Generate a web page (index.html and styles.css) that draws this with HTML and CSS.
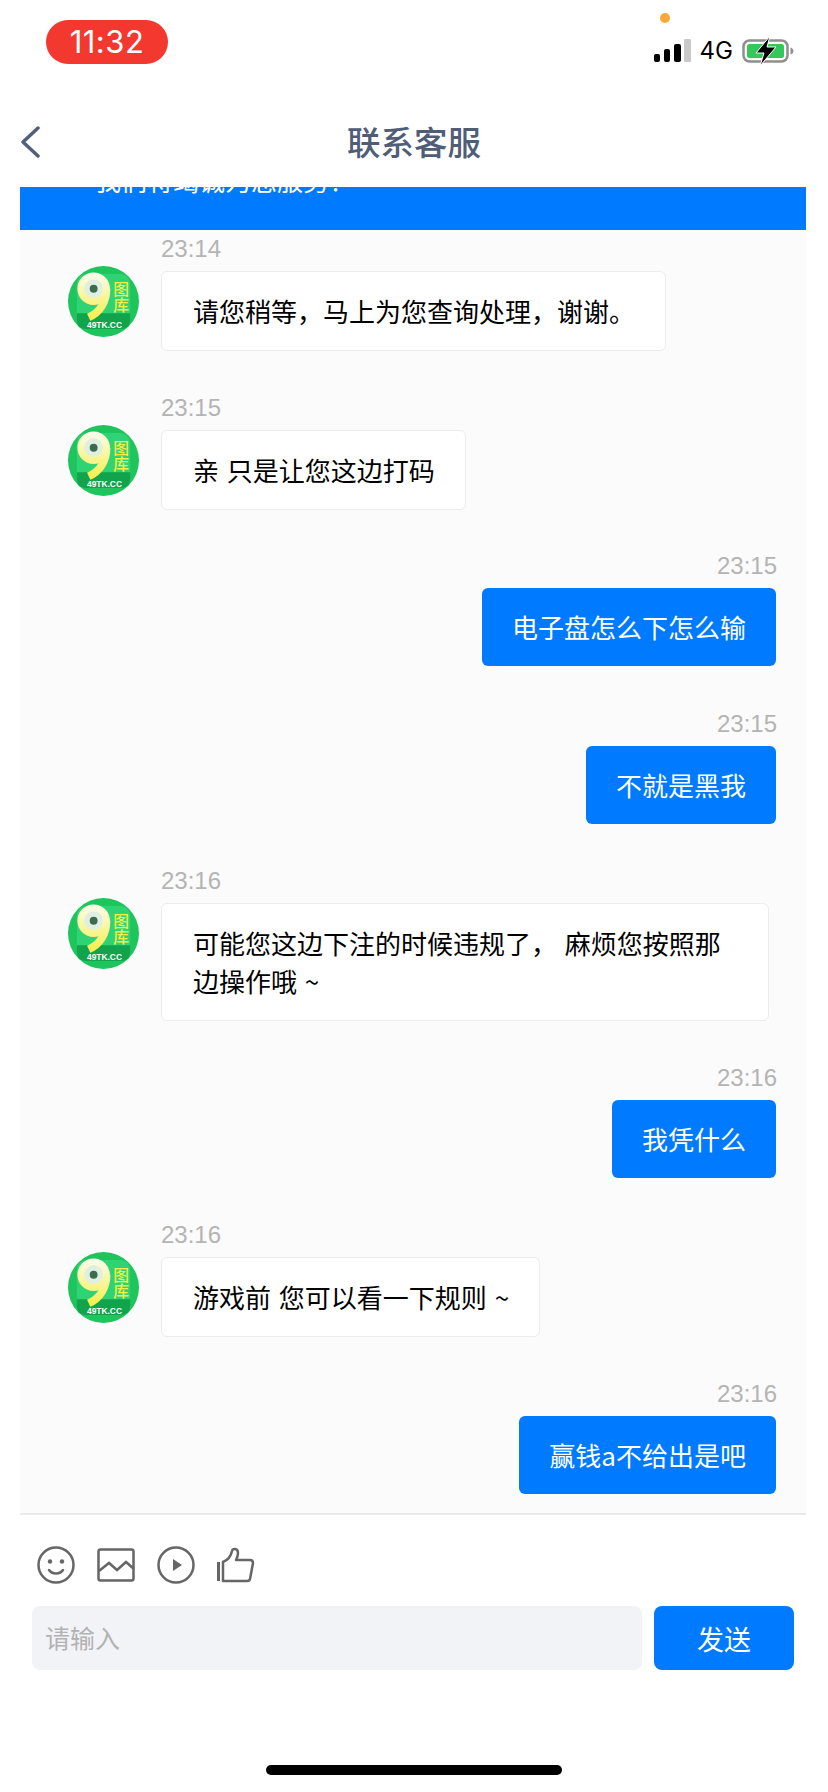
FILE: index.html

```html
<!DOCTYPE html>
<html lang="zh-CN">
<head>
    <meta charset="UTF-8">
    <meta name="viewport" content="width=device-width, initial-scale=1.0">
    <title>联系客服</title>
    <link rel="stylesheet" href="styles.css">
</head>
<body>

    <!-- avatar used by every agent message -->
    <svg class="defs" width="0" height="0">
        <defs>
            <linearGradient id="nine" gradientUnits="userSpaceOnUse" x1="0" y1="6" x2="0" y2="56">
                <stop offset="0" stop-color="#fdfdf0"/>
                <stop offset="1" stop-color="#f5ee45"/>
            </linearGradient>
            <symbol id="logo" viewBox="0 0 72 72">
                <circle cx="36" cy="36" r="36" fill="#1ec45c"/>
                <rect x="9" y="8" width="54" height="52" rx="10" fill="#2fd374"/>
                <path d="M9 48h54v6q0 10-10 10H19q-10 0-10-10z" fill="#12a34d"/>
                <circle cx="26" cy="23" r="13" fill="#dff0e2" stroke="url(#nine)" stroke-width="7"/>
                <path d="M39 23c0 14-7 24-18 29" fill="none" stroke="url(#nine)" stroke-width="8"/>
                <circle cx="26" cy="23" r="4" fill="#3d6b4c"/>
                <text x="54" y="29" class="logo-cn" text-anchor="middle">图</text>
                <text x="54" y="46" class="logo-cn" text-anchor="middle">库</text>
                <text x="37" y="63" class="logo-en" text-anchor="middle">49TK.CC</text>
            </symbol>
        </defs>
    </svg>

    <div class="status-bar">
        <div class="clock">11:32</div>
        <span class="mic-dot"></span>
        <div class="status-right">
            <svg width="37" height="24" viewBox="0 0 37 24">
                <rect x="0" y="15" width="6" height="8" rx="2" fill="#000"/>
                <rect x="10" y="10" width="6" height="13" rx="2" fill="#000"/>
                <rect x="20" y="5" width="7" height="18" rx="2" fill="#000"/>
                <rect x="30" y="0" width="7" height="23" rx="1" fill="#c9c9c9"/>
            </svg>
            <span class="network">4G</span>
            <svg width="52" height="30" viewBox="0 0 52 30">
                <rect x="1.500" y="4.500" width="44" height="21" rx="6" fill="none" stroke="#8f8f8f" stroke-width="2.500"/>
                <rect x="5" y="8" width="37" height="14" rx="2.500" fill="#34c759"/>
                <path d="M48.500 11.500c2 .6 3 2 3 3.500s-1 2.900-3 3.500z" fill="#8f8f8f"/>
                <path d="M28 0L14 17h8l-4 13 16-19h-9z" fill="#000" stroke="#fff" stroke-width="1"/>
            </svg>
        </div>
    </div>

    <div class="nav-bar">
        <svg class="back" width="20" height="32" viewBox="0 0 20 32">
            <path d="M18 2L3 16l15 14" fill="none" stroke="#52607a" stroke-width="3.500" stroke-linecap="round" stroke-linejoin="round"/>
        </svg>
        <h1>联系客服</h1>
    </div>

    <div class="chat">
        <div class="notice"><p>我们将竭诚为您服务！</p></div>

        <div class="msg">
            <svg class="avatar"><use href="#logo"/></svg>
            <div class="msg-body">
                <div class="time">23:14</div>
                <div class="bubble">请您稍等，马上为您查询处理，谢谢。</div>
            </div>
        </div>

        <div class="msg">
            <svg class="avatar"><use href="#logo"/></svg>
            <div class="msg-body">
                <div class="time">23:15</div>
                <div class="bubble">亲 只是让您这边打码</div>
            </div>
        </div>

        <div class="msg mine">
            <div class="msg-body">
                <div class="time">23:15</div>
                <div class="bubble">电子盘怎么下怎么输</div>
            </div>
        </div>

        <div class="msg mine">
            <div class="msg-body">
                <div class="time">23:15</div>
                <div class="bubble">不就是黑我</div>
            </div>
        </div>

        <div class="msg">
            <svg class="avatar"><use href="#logo"/></svg>
            <div class="msg-body">
                <div class="time">23:16</div>
                <div class="bubble">可能您这边下注的时候违规了， 麻烦您按照那边操作哦 ~</div>
            </div>
        </div>

        <div class="msg mine">
            <div class="msg-body">
                <div class="time">23:16</div>
                <div class="bubble">我凭什么</div>
            </div>
        </div>

        <div class="msg">
            <svg class="avatar"><use href="#logo"/></svg>
            <div class="msg-body">
                <div class="time">23:16</div>
                <div class="bubble">游戏前 您可以看一下规则 ~</div>
            </div>
        </div>

        <div class="msg mine">
            <div class="msg-body">
                <div class="time">23:16</div>
                <div class="bubble">赢钱a不给出是吧</div>
            </div>
        </div>
    </div>

    <div class="composer">
        <div class="tools">
            <svg width="38" height="38" viewBox="0 0 38 38" fill="none" stroke="#666" stroke-width="2.500">
                <circle cx="19" cy="19" r="17.500"/>
                <circle cx="13" cy="15.500" r="2.200" fill="#666" stroke="none"/>
                <circle cx="25" cy="15.500" r="2.200" fill="#666" stroke="none"/>
                <path d="M12 24c3 4.500 11 4.500 14 0" stroke-linecap="round"/>
            </svg>
            <svg width="38" height="38" viewBox="0 0 38 38" fill="none" stroke="#666" stroke-width="2.500">
                <rect x="1.500" y="3.500" width="35" height="31" rx="2"/>
                <path d="M2 25l10-8 8 7 9-8 8 7"/>
            </svg>
            <svg width="38" height="38" viewBox="0 0 38 38" fill="none" stroke="#666" stroke-width="2.500">
                <circle cx="19" cy="19" r="17.500"/>
                <path d="M16 13l9 6-9 6z" fill="#666" stroke="none"/>
            </svg>
            <svg width="38" height="38" viewBox="0 0 38 38" fill="none" stroke="#666" stroke-width="2.500">
                <path d="M1.500 16v19" stroke-width="3"/>
                <path d="M6 35V16c5-2 8-6 9-11 .5-3 6-3 6 2 0 3-1 5-2 7h14c2 0 3 1.500 3 3l-3 16c-.3 1.500-1.500 2-3 2z" stroke-linejoin="round"/>
            </svg>
        </div>
        <div class="input-row">
            <div class="input">请输入</div>
            <button type="button" class="send">发送</button>
        </div>
    </div>

    <div class="home-bar"></div>

</body>
</html>
```

FILE: styles.css

```css
* {
    box-sizing: border-box;
}
html, body {
    margin: 0;
    padding: 0;
}
body {
    width: 828px;
    height: 1792px;
    overflow: hidden;
    position: relative;
    display: flex;
    flex-direction: column;
    background: #fff;
    color: #000;
    font-family: "Liberation Sans", "Noto Sans CJK SC", sans-serif;
}
.defs {
    position: absolute;
}
.logo-cn {
    font-size: 16px;
    font-weight: 500;
    fill: #f3ee4a;
    font-family: "Noto Sans CJK SC", sans-serif;
}
.logo-en {
    font-size: 8.500px;
    font-weight: bold;
    fill: #fff;
    font-family: "Liberation Sans", sans-serif;
}

/* status bar */
.status-bar {
    height: 100px;
    display: flex;
    justify-content: space-between;
    align-items: flex-start;
    padding: 20px 34px 0 46px;
}
.clock {
    width: 122px;
    height: 44px;
    border-radius: 22px;
    background: #f2382f;
    color: #fff;
    font-family: Inter, "Liberation Sans", sans-serif;
    font-size: 31px;
    letter-spacing: 0.5px;
    line-height: 44px;
    text-align: center;
}
.mic-dot {
    position: absolute;
    left: 660px;
    top: 13px;
    width: 10px;
    height: 10px;
    border-radius: 50%;
    background: #f7a93b;
}
.status-right {
    display: flex;
    align-items: center;
    gap: 9px;
    margin-top: 16px;
}
.network {
    font-size: 24px;
    line-height: 28px;
    font-family: Inter, "Liberation Sans", sans-serif;
}

/* nav */
.nav-bar {
    height: 87px;
    padding-bottom: 7px;
    display: flex;
    align-items: center;
    justify-content: center;
    position: relative;
}
.nav-bar h1 {
    margin: 0;
    font-size: 33.500px;
    font-weight: 500;
    color: #4f5d77;
    font-family: "Noto Sans CJK SC", sans-serif;
}
.back {
    position: absolute;
    left: 20px;
    top: 26px;
}

/* chat panel */
.chat {
    height: 1328px;
    margin: 0 22px 0 20px;
    overflow: hidden;
    background: #fbfbfb;
    border-bottom: 2px solid #eaeaea;
    font-family: "Noto Sans CJK SC", sans-serif;
}
.notice {
    height: 43px;
    overflow: hidden;
    background: #007aff;
    color: #fff;
    font-size: 26px;
    padding-left: 75px;
}
.notice p {
    margin: -26px 0 0;
    line-height: 38px;
}
.msg {
    display: flex;
    gap: 22px;
    padding-left: 48px;
    margin-bottom: 38.500px;
}
.msg:nth-child(2) {
    margin-top: 1px;
}
.avatar {
    width: 71px;
    height: 71px;
    margin-top: 35px;
    flex: none;
}
.time {
    height: 36px;
    margin-bottom: 4px;
    font-family: "Liberation Sans", sans-serif;
    font-size: 24px;
    line-height: 36px;
    color: #b4b4b4;
}
.bubble {
    width: fit-content;
    max-width: 608px;
    padding: 20px 30px 20px 31px;
    border: 1px solid #ececec;
    border-radius: 6px;
    background: #fff;
    font-size: 26px;
    line-height: 38px;
    word-spacing: 2px;
}
.mine {
    justify-content: flex-end;
    padding: 0 30px 0 0;
    margin-bottom: 39.500px;
}
.mine .time {
    text-align: right;
    margin-right: -1px;
}
.mine .bubble {
    margin-left: auto;
    border: 0;
    padding: 20px 30px;
    background: #007aff;
    color: #fff;
}

/* input area */
.composer {
    padding: 31px 34px 0 32px;
    font-family: "Noto Sans CJK SC", sans-serif;
}
.tools {
    display: flex;
    gap: 22px;
    padding-left: 5px;
}
.input-row {
    display: flex;
    gap: 12px;
    margin-top: 22px;
}
.input {
    flex: 1;
    height: 64px;
    padding-left: 13px;
    border-radius: 8px;
    background: #f2f3f7;
    color: #b2b2b2;
    font-size: 25px;
    line-height: 62px;
}
.send {
    width: 140px;
    height: 64px;
    border: 0;
    border-radius: 8px;
    background: #007aff;
    color: #fff;
    font-family: inherit;
    font-size: 27px;
    padding: 0;
}
.home-bar {
    width: 296px;
    height: 10px;
    margin: 95px auto 0;
    border-radius: 5px;
    background: #000;
}
```
